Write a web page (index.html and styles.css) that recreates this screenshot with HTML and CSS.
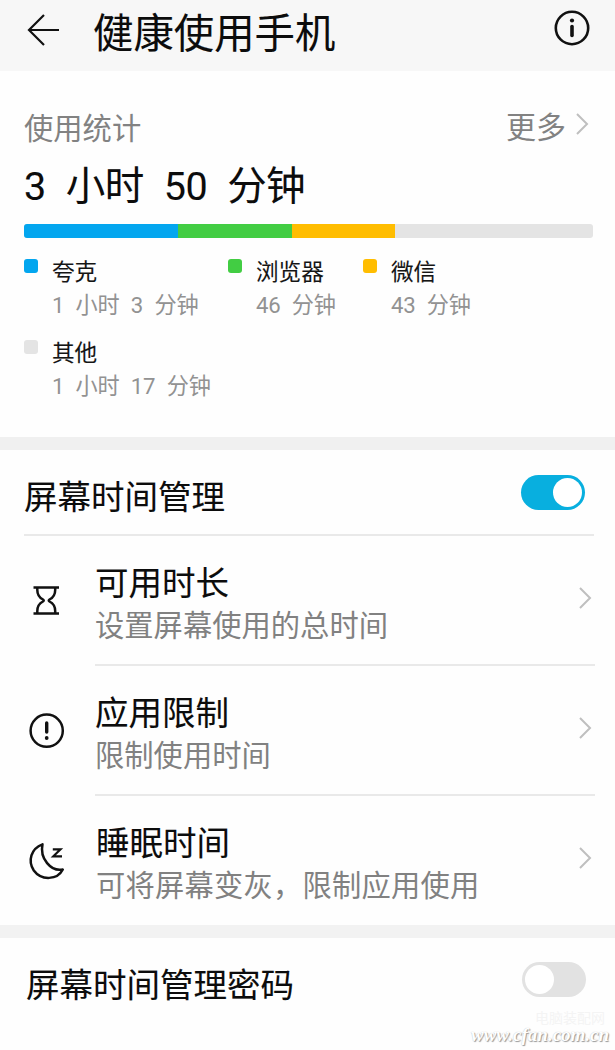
FILE: index.html
```html
<!DOCTYPE html>
<html lang="zh-CN">
<head>
<meta charset="utf-8">
<title>健康使用手机</title>
<link rel="stylesheet" href="styles.css">
</head>
<body>
<header class="topbar">
  <svg class="back" width="34" height="34" viewBox="0 0 34 34"><path d="M33 17H3M18 2L3 17l15 15"/></svg>
  <h1 class="title">健康使用手机</h1>
  <svg class="info" width="36" height="36" viewBox="0 0 36 36"><circle cx="18" cy="18" r="16.2"/><path d="M18 16.5v9"/><circle class="dot" cx="18" cy="10.5" r="2.1"/></svg>
</header>

<section class="stats">
  <div class="stats-head">
    <span class="stats-label">使用统计</span>
    <span class="more">更多</span>
    <svg class="chevron" width="14" height="24" viewBox="0 0 14 24"><path d="M2 2l10 10L2 22"/></svg>
  </div>
  <div class="total">3 小时 50 分钟</div>
  <div class="bar">
    <i class="blue" style="width:154px"></i><i class="green" style="width:113.5px"></i><i class="yellow" style="width:103px"></i>
  </div>
  <div class="legend">
    <div class="entry"><i class="swatch blue"></i><div><div class="name">夸克</div><div class="time">1 小时 3 分钟</div></div></div>
    <div class="entry"><i class="swatch green"></i><div><div class="name">浏览器</div><div class="time">46 分钟</div></div></div>
    <div class="entry"><i class="swatch yellow"></i><div><div class="name">微信</div><div class="time">43 分钟</div></div></div>
    <div class="entry"><i class="swatch grey"></i><div><div class="name">其他</div><div class="time">1 小时 17 分钟</div></div></div>
  </div>
</section>

<div class="band"></div>

<section>
  <div class="switch-row">
    <span class="row-title">屏幕时间管理</span>
    <span class="switch on"><i></i></span>
  </div>
  <div class="item">
    <svg class="icon" width="44" height="44" viewBox="0 0 44 44"><path d="M9.5 8.5h25.5M9.5 34.5h25.5M13.3 9v2C13.3 17 16 19 19 20.500Q20.500 21.500 19 22.500C16 24 13.300 26 13.300 32v2M31.200 9v2C31.200 17 28.500 19 25.500 20.500Q24 21.500 25.500 22.500C28.500 24 31.200 26 31.200 32v2"/></svg>
    <div class="item-body">
      <div class="text"><div class="row-title">可用时长</div><div class="sub">设置屏幕使用的总时间</div></div>
      <svg class="chevron" width="14" height="24" viewBox="0 0 14 24"><path d="M2 2l10 10L2 22"/></svg>
    </div>
  </div>
  <div class="item">
    <svg class="icon" width="44" height="44" viewBox="0 0 44 44"><circle cx="22.7" cy="21.7" r="16.1"/><path class="bang" d="M22.7 14v9"/><circle class="dot" cx="22.7" cy="29" r="1.9"/></svg>
    <div class="item-body">
      <div class="text"><div class="row-title">应用限制</div><div class="sub">限制使用时间</div></div>
      <svg class="chevron" width="14" height="24" viewBox="0 0 14 24"><path d="M2 2l10 10L2 22"/></svg>
    </div>
  </div>
  <div class="item last">
    <svg class="icon" width="44" height="44" viewBox="0 0 44 44"><path d="M18.5 5.3C7 9.5 3.5 22 9.8 31.5C17.5 42 33.5 41 38.8 30.5C27 33 15.5 19.500 18.500 5.300Z"/><path class="zed" d="M28.800 10.300H36.500L29.300 17.300H38"/></svg>
    <div class="item-body">
      <div class="text"><div class="row-title">睡眠时间</div><div class="sub long">可将屏幕变灰，限制应用使用</div></div>
      <svg class="chevron" width="14" height="24" viewBox="0 0 14 24"><path d="M2 2l10 10L2 22"/></svg>
    </div>
  </div>
</section>

<div class="band pale"></div>

<div class="switch-row password">
  <span class="row-title">屏幕时间管理密码</span>
  <span class="switch"><i></i></span>
</div>

<div class="mark-cn">电脑装配网</div>
<div class="mark">www.cfan.com.cn</div>
</body>
</html>
```
FILE: styles.css
```css
* { box-sizing: border-box; }
body {
  margin: 0;
  position: relative;
  width: 615px;
  height: 1050px;
  overflow: hidden;
  background: #fefefe;
  color: #0c0c0c;
  font-family: Roboto, "Noto Sans CJK SC", sans-serif;
}
svg { flex: none; fill: none; stroke: #111; stroke-width: 2.2; }
svg .dot { fill: #111; stroke: none; }

.topbar {
  display: flex;
  height: 71px;
  padding-left: 26px;
  background: #f7f7f7;
}
.back { margin-top: 13px; }
.title {
  margin: 4px 0 0 33px;
  font-size: 40.4px;
  font-weight: 400;
  line-height: 62px;
  white-space: nowrap;
}
.title, .total, .row-title, .name { -webkit-text-stroke: .1px currentColor; }
.info { margin: 10px 25px 0 auto; stroke-width: 2.6; }
.info path { stroke-width: 3.6; stroke-linecap: round; }

.stats { height: 366px; padding: 37px 22px 0 24px; }
.stats-head { display: flex; height: 42px; color: #828282; font-size: 29.3px; line-height: 42px; }
.more { margin: -1px 9px 0 auto; font-size: 30px; }
.stats-head .chevron { margin: 4px 4px 0 0; }
.chevron { stroke: #bfbfbf; stroke-width: 2; }
.total { height: 74px; font-size: 39.5px; line-height: 74px; letter-spacing: -.6px; word-spacing: 11px; white-space: nowrap; }
.bar { display: flex; height: 14px; border-radius: 3px; overflow: hidden; background: #e4e4e4; }
.blue { background: #03a6ef; }
.green { background: #42cd43; }
.yellow { background: #ffbd01; }
.grey { background: #e4e4e4; }

.legend { display: grid; grid-template-columns: 204px 135px 1fr; margin-top: 18px; row-gap: 12px; }
.entry { display: flex; gap: 14px; height: 69px; }
.swatch { flex: none; width: 14px; height: 14px; margin-top: 3px; border-radius: 3px; }
.name { font-size: 22.6px; line-height: 33px; color: #151515; }
.time { font-size: 22.2px; line-height: 33px; color: #929292; letter-spacing: -.2px; word-spacing: 6px; white-space: nowrap; }

.band { height: 13px; background: #f0f0f0; }
.band.pale { background: #f2f2f2; }
.switch-row {
  display: flex;
  align-items: center;
  height: 86px;
  margin: 0 21px 0 24px;
  padding-right: 9px;
  border-bottom: 2px solid #e9e9e9;
}
.row-title { font-size: 33.5px; line-height: 44px; white-space: nowrap; }
.switch-row .row-title { margin-top: 12px; }
.switch {
  display: flex;
  width: 64px;
  height: 35px;
  margin-left: auto;
  padding: 3px;
  border-radius: 18px;
  background: #e2e2e2;
}
.switch i { width: 29px; height: 29px; border-radius: 50%; background: #fff; }
.switch.on { justify-content: flex-end; background: #08afdf; }

.item { display: flex; height: 130px; padding: 0 20px 0 24px; }
.icon { margin-top: 43px; stroke-width: 2.5; stroke-linejoin: round; }
.bang { stroke-width: 3.4; stroke-linecap: round; }
.zed { stroke-width: 2.2; stroke-linejoin: miter; }
.item-body { display: flex; flex: 1; margin-left: 27px; border-bottom: 2px solid #e9e9e9; }
.item.last { height: 129px; }
.last .item-body { border-bottom: 0; }
.text { padding-top: 26px; }
.sub { font-size: 29.3px; line-height: 41px; color: #818181; white-space: nowrap; }
.last .text { padding-left: 1px; }
.sub.long { letter-spacing: .2px; }
.item .chevron { margin: 50px 3px 0 auto; }

.password { height: 84px; margin: 0 20px 0 26px; border: 0; }
.password .switch { margin-top: -2px; }

.mark, .mark-cn { position: absolute; white-space: nowrap; }
.mark {
  left: 471px;
  top: 1025px;
  font: italic bold 19px/19px "Liberation Serif", serif;
  color: #fff;
  text-shadow: 1px 1px 1px #999, 0 0 1px #bbb;
}
.mark-cn { left: 535px; top: 1011px; font-size: 14px; line-height: 14px; color: #f4f4f4; }
```
